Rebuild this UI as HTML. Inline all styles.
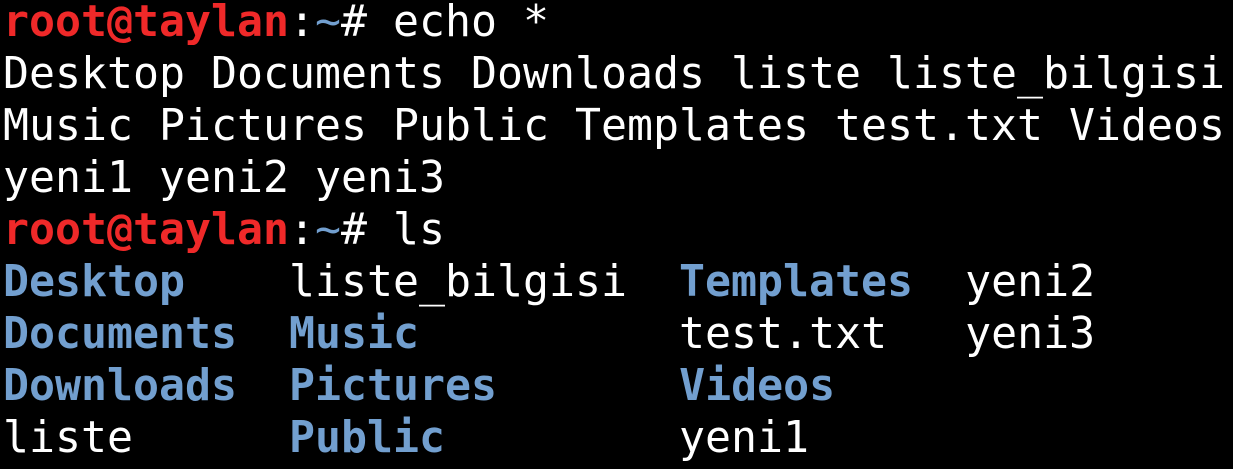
<!DOCTYPE html><html><head><style>
html,body{margin:0;background:#000;width:1233px;height:469px;overflow:hidden}
pre{margin:0;position:absolute;left:3px;top:-4px;font-family:"DejaVu Sans Mono",monospace;font-size:43.2px;line-height:52px;color:#fff}
.r{color:#ef2929;font-weight:bold}.b{color:#729fcf;font-weight:bold}.t{color:#729fcf}
</style></head><body><pre><span class="r">root@taylan</span>:<span class="t">~</span># echo *
Desktop Documents Downloads liste liste_bilgisi
Music Pictures Public Templates test.txt Videos
yeni1 yeni2 yeni3
<span class="r">root@taylan</span>:<span class="t">~</span># ls
<span class="b">Desktop</span>    liste_bilgisi  <span class="b">Templates</span>  yeni2
<span class="b">Documents</span>  <span class="b">Music</span>          test.txt   yeni3
<span class="b">Downloads</span>  <span class="b">Pictures</span>       <span class="b">Videos</span>
liste      <span class="b">Public</span>         yeni1</pre></body></html>
